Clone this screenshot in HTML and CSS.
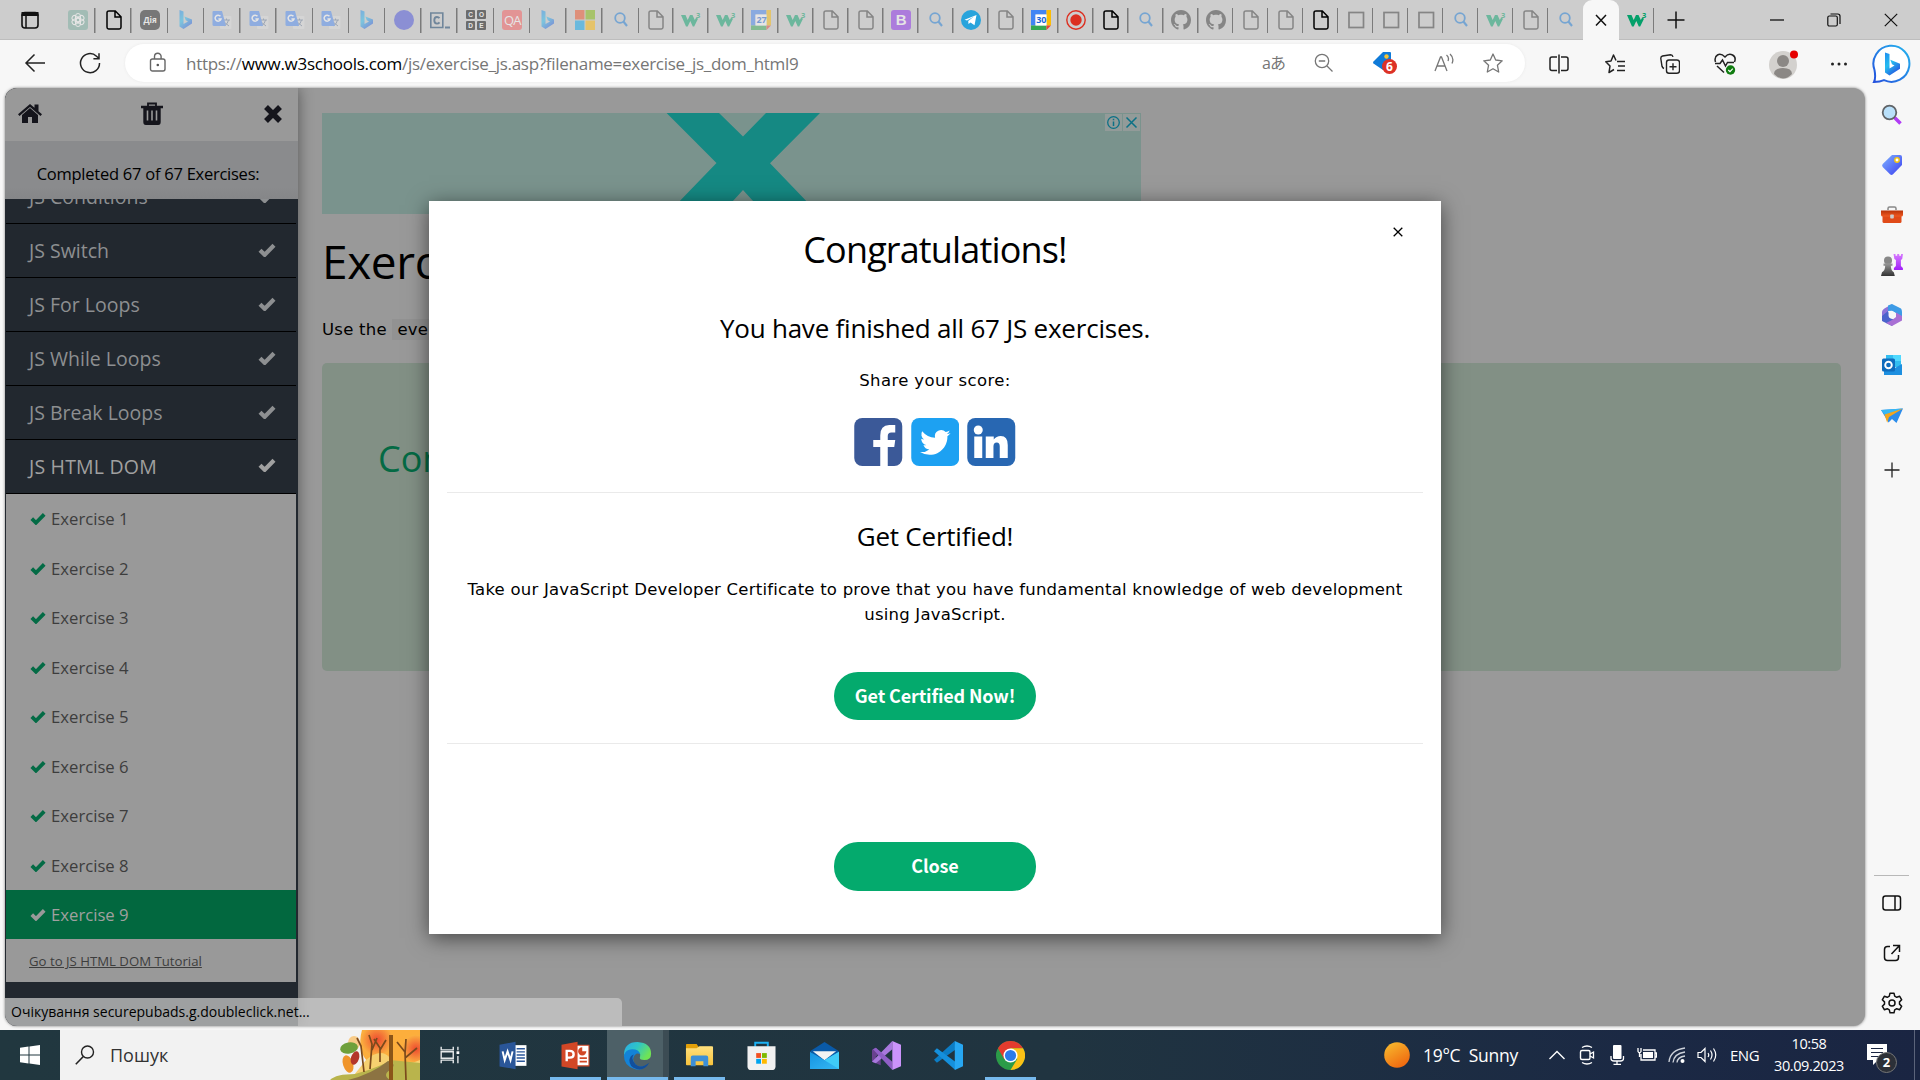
FILE: index.html
```html
<!DOCTYPE html>
<html lang="uk">
<head>
<meta charset="utf-8">
<title>Exercise</title>
<link rel="stylesheet" href="styles.css">
</head>
<body>
<svg class="defs" width="20" height="20">
  <defs>
    <linearGradient id="gb" x1="0" y1="0" x2="0.6" y2="1"><stop offset="0" stop-color="#1f8df0"/><stop offset=".5" stop-color="#25bdf0"/><stop offset="1" stop-color="#2458e0"/></linearGradient>
    <linearGradient id="gring" x1="0" y1="1" x2="1" y2="0"><stop offset="0" stop-color="#2450dd"/><stop offset="1" stop-color="#25b5ee"/></linearGradient>
    <linearGradient id="gtag" x1="0" y1="0" x2="1" y2="1"><stop offset="0" stop-color="#7fb4ff"/><stop offset="1" stop-color="#3b3df0"/></linearGradient>
    <linearGradient id="gred" x1="0" y1="0" x2="0" y2="1"><stop offset="0" stop-color="#b83208"/><stop offset="1" stop-color="#f05a22"/></linearGradient>
    <linearGradient id="gpurp" x1="0" y1="0" x2="0" y2="1"><stop offset="0" stop-color="#d77bff"/><stop offset="1" stop-color="#a020f8"/></linearGradient>
    <linearGradient id="ggray" x1="0" y1="0" x2="0" y2="1"><stop offset="0" stop-color="#999"/><stop offset="1" stop-color="#333"/></linearGradient>
    <linearGradient id="gsun" x1="0" y1="0" x2=".6" y2="1"><stop offset="0" stop-color="#f8c030"/><stop offset="1" stop-color="#f06a10"/></linearGradient>
    <linearGradient id="gedge" x1="0" y1="0" x2="1" y2=".5"><stop offset="0" stop-color="#2aa9ea"/><stop offset=".5" stop-color="#2fc6c6"/><stop offset="1" stop-color="#6fe455"/></linearGradient>
    <linearGradient id="gfold" x1="0" y1="0" x2="0" y2="1"><stop offset="0" stop-color="#ffe07e"/><stop offset="1" stop-color="#f8c33c"/></linearGradient>
    <linearGradient id="gmail" x1="0" y1="0" x2="1" y2="1"><stop offset="0" stop-color="#1592e0"/><stop offset="1" stop-color="#35b8f4"/></linearGradient>
    <radialGradient id="gleaf"><stop offset="0" stop-color="#ee4a30"/><stop offset="1" stop-color="#fbb040"/></radialGradient>
  </defs>
  <symbol id="doc" viewBox="0 0 20 20"><path d="M4.500 1h6.800L17 6.700v10.600q0 1.700-1.700 1.700H4.700Q3 19 3 17.300V2.700Q3 1 4.700 1M11 1.200V7h5.800" fill="none" stroke="currentColor" stroke-width="1.500"/></symbol>
  <symbol id="mag" viewBox="0 0 20 20"><circle cx="9" cy="8" r="4.800" fill="none" stroke="currentColor" stroke-width="1.800"/><path d="M12.400 11.500 16 16" stroke="currentColor" stroke-width="2.100"/></symbol>
  <symbol id="bing" viewBox="0 0 20 20"><path d="M3.500 0 7.500 1.500V14l4.500-2.600-2.200-1.200L8.400 6.600l7.600 3v4L7.500 19l-4-2.500z" fill="url(#gb)"/></symbol>
  <symbol id="trans" viewBox="0 0 20 20"><rect x="8" y="6" width="11.500" height="13" rx="1" fill="#dedede"/><path d="M11 10h7M14.500 8.500V10M12 16q4-2 4.500-6M12 12l5 4" stroke="#6b7f9c" fill="none"/><path d="M1.500 1H10l4 15H2Q.5 16 .5 14.500V2q0-1 1-1z" fill="#4d8bf5"/><path d="M8.500 6.300A3 3 0 1 0 9 9H6.400" fill="none" stroke="#fff" stroke-width="1.500"/></symbol>
  <symbol id="w3" viewBox="0 0 20 20"><path d="M0 5h4.500l2.200 5L9 5h2.500l2.300 5 1.400-2.500 1.800 1.300L13.200 16.500h-1.400L9.300 11l-2.600 5.500H5z" fill="currentColor"/><text x="15" y="7.500" font-size="7.500" font-weight="700" fill="currentColor">3</text></symbol>
  <symbol id="cal" viewBox="0 0 20 20"><path d="M0 0h15.500v4.500H4.500v11H0z" fill="#4285f4"/><path d="M15.500 0H20v15.500h-4.500z" fill="#fbbc04"/><path d="M0 15.500h15.500V20H0z" fill="#34a853"/><path d="M15.500 15.500H20L15.500 20z" fill="#ea4335"/><path d="M4.500 4.500h11v11h-11z" fill="#fff"/></symbol>
  <symbol id="gh" viewBox="0 0 16 16"><path fill="currentColor" d="M8 0C3.580 0 0 3.580 0 8c0 3.540 2.290 6.530 5.470 7.590.4.070.55-.17.55-.38 0-.19-.01-.82-.01-1.490-2.010.37-2.530-.49-2.690-.94-.09-.23-.48-.94-.82-1.130-.28-.15-.68-.52-.01-.53.63-.01 1.080.58 1.230.82.72 1.210 1.870.87 2.330.66.07-.52.28-.87.51-1.070-1.780-.2-3.640-.89-3.640-3.950 0-.87.31-1.590.82-2.150-.08-.2-.36-1.020.08-2.120 0 0 .67-.21 2.200.82.64-.18 1.320-.27 2-.27s1.360.09 2 .27c1.530-1.040 2.200-.82 2.200-.82.44 1.100.16 1.920.08 2.120.51.56.82 1.270.82 2.150 0 3.070-1.870 3.750-3.650 3.950.29.25.54.73.54 1.480 0 1.070-.01 1.930-.01 2.200 0 .21.15.46.55.38A8 8 0 0 0 16 8c0-4.420-3.580-8-8-8z"/></symbol>
  <symbol id="sq" viewBox="0 0 20 20"><rect x="3" y="2.500" width="14.500" height="15" fill="none" stroke="currentColor" stroke-width="1.700"/></symbol>
  <symbol id="check" viewBox="0 0 18 14"><path d="M2 7.200 6.700 11.800 16 2.300" fill="none" stroke="currentColor" stroke-width="4.200"/></symbol>
</svg>

<div class="tabstrip">
  <div class="lead"><svg width="20" height="20" viewBox="0 0 20 20"><rect x="2" y="2.500" width="16" height="15.500" rx="3" fill="none" stroke="#111" stroke-width="1.600"/><path d="M1.500 2h17v4h-17z" fill="#111"/><path d="M6 6v12" stroke="#111" stroke-width="1.500"/></svg></div>
  <div class="tab wide dim"><svg viewBox="0 0 20 20"><rect width="20" height="20" rx="3" fill="#74aa9c"/><g fill="none" stroke="#fff" stroke-width="1"><rect x="7.500" y="3.500" width="5" height="8.500" rx="2.500"/><rect x="7.500" y="3.500" width="5" height="8.500" rx="2.500" transform="rotate(60 10 10)"/><rect x="7.500" y="3.500" width="5" height="8.500" rx="2.500" transform="rotate(120 10 10)"/><rect x="7.500" y="3.500" width="5" height="8.500" rx="2.500" transform="rotate(180 10 10)"/><rect x="7.500" y="3.500" width="5" height="8.500" rx="2.500" transform="rotate(240 10 10)"/><rect x="7.500" y="3.500" width="5" height="8.500" rx="2.500" transform="rotate(300 10 10)"/></g></svg></div>
  <div class="tab wide black"><svg><use href="#doc"/></svg></div>
  <div class="tab wide"><b class="fav diia">Дія</b></div>
  <div class="tab wide dim"><svg><use href="#bing"/></svg></div>
  <div class="tab wide dim"><svg><use href="#trans"/></svg></div>
  <div class="tab wide dim"><svg><use href="#trans"/></svg></div>
  <div class="tab wide dim"><svg><use href="#trans"/></svg></div>
  <div class="tab wide dim"><svg><use href="#trans"/></svg></div>
  <div class="tab wide dim"><svg><use href="#bing"/></svg></div>
  <div class="tab wide"><i class="fav ball"></i></div>
  <div class="tab wide"><svg viewBox="0 0 20 20"><path d="M.8 3h12v14.500H.8z" fill="none" stroke="#70869b" stroke-width="1.600"/><path d="M9.500 8.200Q8.500 7 7 7 4.300 7 4.300 10.300T7 13.600q1.500 0 2.500-1.200M15 17.500h5" fill="none" stroke="#70869b" stroke-width="1.900"/></svg></div>
  <div class="tab wide"><span class="fav code"><b>C</b><b>O</b><b>D</b><b>E</b></span></div>
  <div class="tab wide"><span class="fav qa">QA</span></div>
  <div class="tab wide dim"><svg><use href="#bing"/></svg></div>
  <div class="tab wide dim"><svg viewBox="0 0 20 20"><path d="M0 0h9.500v9.500H0z" fill="#f25022"/><path d="M10.500 0H20v9.500h-9.500z" fill="#7fba00"/><path d="M0 10.500h9.500V20H0z" fill="#00a4ef"/><path d="M10.500 10.500H20V20h-9.500z" fill="#ffb900"/></svg></div>
  <div class="tab wide blue"><svg><use href="#mag"/></svg></div>
  <div class="tab"><svg><use href="#doc"/></svg></div>
  <div class="tab green dim"><svg><use href="#w3"/></svg></div>
  <div class="tab green dim"><svg><use href="#w3"/></svg></div>
  <div class="tab dim"><span class="cal"><svg><use href="#cal"/></svg><b>27</b></span></div>
  <div class="tab green dim"><svg><use href="#w3"/></svg></div>
  <div class="tab"><svg><use href="#doc"/></svg></div>
  <div class="tab"><svg><use href="#doc"/></svg></div>
  <div class="tab"><span class="fav boot">B</span></div>
  <div class="tab blue"><svg><use href="#mag"/></svg></div>
  <div class="tab"><svg viewBox="0 0 20 20"><circle cx="10" cy="10" r="10" fill="#29a4dc"/><path d="M3.500 9.700 15.500 5l-2 10.200-4-2.800-2 1.700-.3-3.200 5.800-4.400-7 4z" fill="#fff"/></svg></div>
  <div class="tab"><svg><use href="#doc"/></svg></div>
  <div class="tab"><span class="cal"><svg><use href="#cal"/></svg><b>30</b></span></div>
  <div class="tab"><svg viewBox="0 0 20 20"><circle cx="10" cy="10" r="9.200" fill="none" stroke="#dc2f20" stroke-width="1.400"/><circle cx="10" cy="10" r="5.700" fill="#dc2f20"/></svg></div>
  <div class="tab black"><svg><use href="#doc"/></svg></div>
  <div class="tab blue"><svg><use href="#mag"/></svg></div>
  <div class="tab"><svg><use href="#gh"/></svg></div>
  <div class="tab"><svg><use href="#gh"/></svg></div>
  <div class="tab"><svg><use href="#doc"/></svg></div>
  <div class="tab"><svg><use href="#doc"/></svg></div>
  <div class="tab black"><svg><use href="#doc"/></svg></div>
  <div class="tab"><svg><use href="#sq"/></svg></div>
  <div class="tab"><svg><use href="#sq"/></svg></div>
  <div class="tab"><svg><use href="#sq"/></svg></div>
  <div class="tab blue"><svg><use href="#mag"/></svg></div>
  <div class="tab green dim"><svg><use href="#w3"/></svg></div>
  <div class="tab"><svg><use href="#doc"/></svg></div>
  <div class="tab blue last"><svg><use href="#mag"/></svg></div>
  <div class="tab active"><svg viewBox="0 0 20 20"><path d="m5 5 10 10.500M15 5 5 15.500" stroke="#111" stroke-width="1.500"/></svg></div>
  <div class="tab green"><svg><use href="#w3"/></svg></div>
  <div class="plus"><svg width="20" height="20" viewBox="0 0 20 20"><path d="M10 1.500v17M1.500 10h17" stroke="#111" stroke-width="1.500"/></svg></div>
  <div class="winctl">
    <svg viewBox="0 0 14 14"><path d="M0 7h14" stroke="#111" stroke-width="1.300"/></svg>
    <svg viewBox="0 0 14 14"><rect x=".8" y="3" width="9.500" height="10" rx="1.500" fill="none" stroke="#111" stroke-width="1.200"/><path d="M3.500 1h7.300Q13 1 13 3.200V11" fill="none" stroke="#111" stroke-width="1.200"/></svg>
    <svg viewBox="0 0 14 14"><path d="m.8.800 12.400 12.400M13.200.8.800 13.200" stroke="#111" stroke-width="1.200"/></svg>
  </div>
</div>

<div class="toolbar">
  <div class="nav"><svg width="22" height="22" viewBox="0 0 22 22"><path d="M21 11H2M10.500 2.500 2 11l8.500 8.500" fill="none" stroke="#222" stroke-width="1.500"/></svg></div>
  <div class="nav"><svg width="22" height="22" viewBox="0 0 22 22"><path d="M20.500 11A9.500 9.500 0 1 1 17.500 4.200L20 6.500M20 1.200v5.500h-5.600" fill="none" stroke="#222" stroke-width="1.500"/></svg></div>
  <div class="omnibox">
    <svg class="lock" width="18" height="20" viewBox="0 0 18 20"><rect x="1.500" y="7" width="14.500" height="12" rx="2" fill="none" stroke="#666" stroke-width="1.400"/><path d="M5.500 7V4.500a3.300 3.300 0 0 1 6.600 0V7" fill="none" stroke="#666" stroke-width="1.400"/><circle cx="8.800" cy="13" r="1.300" fill="#555"/></svg>
    <div class="url">https://<span>www.w3schools.com</span>/js/exercise_js.asp?filename=exercise_js_dom_html9</div>
    <div class="omni-actions">
      <span class="tr">aあ</span>
      <svg viewBox="0 0 20 20"><circle cx="8" cy="8" r="6.700" fill="none" stroke="#767676" stroke-width="1.300"/><path d="M4.800 8h6.400M13 13l5.500 5.500" stroke="#767676" stroke-width="1.300"/></svg>
      <svg class="shop" viewBox="0 0 26 24"><path d="M11 1h7q1 0 1 1v17h-8L1.500 12.500q-1-1 0-2z" fill="#0f7ad8"/><circle cx="14.500" cy="5.500" r="2.200" fill="#f7c331"/><circle cx="17.500" cy="15.500" r="7.500" fill="#dd3226"/><text x="17.500" y="20" text-anchor="middle" font-size="12" font-weight="700" fill="#fff">6</text></svg>
      <svg viewBox="0 0 20 20"><path d="M1 18 6.500 4h1L13 18M3 13h8M12.500 2q3 2.500 1.500 6M16 1q4.500 4 2 9.500" fill="none" stroke="#767676" stroke-width="1.300"/></svg>
      <svg viewBox="0 0 20 20"><path d="m10 1 2.700 6 6.500.8-4.800 4.400L15.700 19 10 15.700 4.300 19l1.300-6.800L.8 7.800l6.500-.8z" fill="none" stroke="#767676" stroke-width="1.300" stroke-linejoin="round"/></svg>
    </div>
  </div>
  <div class="actions">
    <svg viewBox="0 0 20 20"><path d="M8 3H3Q1 3 1 5v9.500q0 2 2 2h5M12 3h5q2 0 2 2v9.500q0 2-2 2h-5M10 .5v19" fill="none" stroke="#222" stroke-width="1.500"/></svg>
    <svg viewBox="0 0 20 20"><path d="M11 6.500 8.500 1 6 7 .8 7.800 5 12 4 18.500l5-3M12 7.500h8M13 12h7M12 16.500h8" fill="none" stroke="#222" stroke-width="1.500" stroke-linejoin="round"/></svg>
    <svg viewBox="0 0 20 20"><rect x="6.500" y="6" width="13" height="13.300" rx="2.500" fill="none" stroke="#222" stroke-width="1.400"/><path d="M13 9.200v7M9.500 12.700h7M4 14.500Q2.500 14 2 12.300L.8 4.500Q.7 2.500 2.500 2L10.500.8q2 0 2.500 2" fill="none" stroke="#222" stroke-width="1.400"/></svg>
    <svg class="heart" viewBox="0 0 22 22"><path d="M1.500 9Q0 4 3.500 2T11 4q3.500-4 7.500-2t2 7M1 10.500h5L8.500 7l3 6 2-3.500H20M3 13l7 6.500" fill="none" stroke="#222" stroke-width="1.500"/><circle cx="16.500" cy="17" r="4.700" fill="#107c10"/><path d="m14.300 17 1.700 1.700 2.800-3" fill="none" stroke="#fff" stroke-width="1.200"/></svg>
    <svg class="avatar" viewBox="0 0 30 30"><circle cx="15" cy="16" r="14" fill="#d3d1ce"/><circle cx="15" cy="12" r="6" fill="#8b8885"/><path d="M6 25q0-6 9-6t9 6q-9 9-18 0z" fill="#8b8885"/><circle cx="26" cy="5.500" r="4" fill="#e60000"/></svg>
    <svg viewBox="0 0 20 20"><g fill="#222"><circle cx="3.500" cy="10" r="1.500"/><circle cx="10" cy="10" r="1.500"/><circle cx="16.500" cy="10" r="1.500"/></g></svg>
    <svg class="copilot" viewBox="0 0 40 40"><path d="M2 38Q4 34 2.500 26A18 18 0 1 1 12 36.200Q8 38 2 38z" fill="#fff" stroke="url(#gring)" stroke-width="2"/><path d="M13 8.500 17.500 10v14.500l5-3-2.500-1.200-1.700-4.500 9.700 4v5L17.500 31.500l-4.500-3z" fill="url(#gb)"/></svg>
  </div>
</div>

<div class="middle">
  <div class="viewport">
    <aside class="sidenav">
      <div class="side-tools">
        <svg width="24" height="20" viewBox="0 0 24 20"><path d="M12 4 4 11v8h6v-6h4v6h6v-8z"/><path d="M12 0 0 10.300l1.500 1.600L12 3l10.500 9 1.500-1.700-3.500-3V.5h-4v3.300z"/></svg>
        <svg width="22" height="23" viewBox="0 0 22 23"><path d="M7 4V1.500h8V4" fill="none" stroke="#15151c" stroke-width="1.800"/><path d="M0 3.800h22v2.400H0zM2.300 6h17.400v14q0 3-2.500 3H4.800q-2.500 0-2.500-3z"/><path d="M6.500 8.500v10M11 8.500v10M15.500 8.500v10" stroke="#999" stroke-width="1.600"/></svg>
        <svg width="20" height="20" viewBox="0 0 20 20"><path d="m3 3 14 14M17 3 3 17" stroke="#15151c" stroke-width="5.500"/></svg>
      </div>
      <div class="completed">Completed 67 of 67 Exercises:</div>
      <div class="side-list">
        <div class="group first"><span>JS Conditions</span><svg><use href="#check"/></svg></div>
        <div class="group"><span>JS Switch</span><svg><use href="#check"/></svg></div>
        <div class="group"><span>JS For Loops</span><svg><use href="#check"/></svg></div>
        <div class="group"><span>JS While Loops</span><svg><use href="#check"/></svg></div>
        <div class="group"><span>JS Break Loops</span><svg><use href="#check"/></svg></div>
        <div class="group open"><span>JS HTML DOM</span><svg><use href="#check"/></svg></div>
        <div class="ex"><svg><use href="#check"/></svg>Exercise 1</div>
        <div class="ex"><svg><use href="#check"/></svg>Exercise 2</div>
        <div class="ex"><svg><use href="#check"/></svg>Exercise 3</div>
        <div class="ex"><svg><use href="#check"/></svg>Exercise 4</div>
        <div class="ex"><svg><use href="#check"/></svg>Exercise 5</div>
        <div class="ex"><svg><use href="#check"/></svg>Exercise 6</div>
        <div class="ex"><svg><use href="#check"/></svg>Exercise 7</div>
        <div class="ex"><svg><use href="#check"/></svg>Exercise 8</div>
        <div class="ex current"><svg><use href="#check"/></svg>Exercise 9</div>
        <div class="tutorial"><u>Go to JS HTML DOM Tutorial</u></div>
      </div>
    </aside>
    <main class="content">
      <div class="ad">
        <svg class="ad-art" width="819" height="101" viewBox="0 0 819 101"><path d="M344.600 0H397L421 23.500 444 0h54l-50 50.300L490 94l6 7h-53l-22-24-22 24h-53l6-7L394.500 50z" fill="#158983"/></svg>
        <div class="ad-ctl"><svg viewBox="0 0 17 17"><circle cx="8.500" cy="8.500" r="5.800" fill="none" stroke="#0b7186" stroke-width="1.300"/><path d="M8.500 7.500v4.500M8.500 4.800v1.500" stroke="#0b7186" stroke-width="1.500"/></svg><svg viewBox="0 0 17 17"><path d="m3.500 3.500 10 10M13.500 3.500l-10 10" stroke="#0b7186" stroke-width="1.500"/></svg></div>
      </div>
      <h1>Exercise:</h1>
      <p class="task">Use the <code>eventListener</code></p>
      <div class="result">Congratulations!</div>
    </main>
    <div class="modal">
      <svg class="modal-x" width="10" height="10" viewBox="0 0 10 10"><path d="m.7.700 8.600 8.600M9.300.7.700 9.300" stroke="#000" stroke-width="1.300"/></svg>
      <h2>Congratulations!</h2>
      <h3 class="finished">You have finished all 67 JS exercises.</h3>
      <p class="share">Share your score:</p>
      <div class="social">
        <svg viewBox="0 0 48 48"><rect width="48" height="48" rx="8" fill="#3b5998"/><path d="M26 48V29h-7v-7h7v-4.500Q26 7 35 7h6v7.500h-4Q33.500 14.500 33.500 18v4H41l-1 7h-6.500v19z" fill="#fff"/></svg>
        <svg viewBox="0 0 48 48"><rect width="48" height="48" rx="8" fill="#1da1f2"/><path transform="translate(8.800 9.200) scale(1.270)" fill="#fff" d="M24 4.560a10 10 0 0 1-2.830.78 5 5 0 0 0 2.160-2.730 10 10 0 0 1-3.120 1.200 4.920 4.920 0 0 0-8.390 4.480A14 14 0 0 1 1.670 3.150a4.930 4.930 0 0 0 1.520 6.570 4.900 4.900 0 0 1-2.230-.61c-.05 2.280 1.580 4.420 3.950 4.890a4.900 4.900 0 0 1-2.220.09 4.930 4.930 0 0 0 4.600 3.420A9.900 9.900 0 0 1 0 19.540a14 14 0 0 0 7.550 2.210c9.140 0 14.300-7.720 13.990-14.640A10 10 0 0 0 24 4.560z"/></svg>
        <svg viewBox="0 0 48 48"><rect width="48" height="48" rx="8" fill="#2867b2"/><g fill="#fff"><circle cx="11" cy="12" r="4.500"/><path d="M7 18.500h8V40H7zM18.500 18.500h8v3q2.500-3.500 7-3.500 7 0 7 9v13h-8V28.500q0-4-3-4-3.300 0-3.300 4V40h-7.700z"/></g></svg>
      </div>
      <hr>
      <h3 class="cert">Get Certified!</h3>
      <p class="desc">Take our JavaScript Developer Certificate to prove that you have fundamental knowledge of web development<br>using JavaScript.</p>
      <div class="btn">Get Certified Now!</div>
      <hr class="second">
      <div class="btn close">Close</div>
    </div>
    <div class="status">Очікування securepubads.g.doubleclick.net...</div>
  </div>

  <div class="edgebar">
    <svg viewBox="0 0 22 22"><path d="m13.500 13.500 6 6" stroke="#b13cf5" stroke-width="3.600"/><circle cx="8.500" cy="8.500" r="6.800" fill="#b9e0fa" stroke="#606468" stroke-width="1.800"/></svg>
    <svg viewBox="0 0 22 22"><path d="M11 1h8q2 0 2 2v8L12 20.300q-1.500 1.300-3 0L1.700 13q-1.200-1.500 0-3z" fill="url(#gtag)"/><circle cx="16" cy="6" r="2.200" fill="#fff" stroke="#f3c515" stroke-width="1.500"/></svg>
    <svg viewBox="0 0 22 22"><path d="M7 6V4.500Q7 3 8.500 3h5Q15 3 15 4.500V6" fill="none" stroke="#888" stroke-width="1.500"/><path d="M1.500 10h19v7.500q0 1.500-1.500 1.500H3q-1.500 0-1.500-1.500z" fill="#e04a18"/><path d="M0 6.500h22V11q0 1.500-2 1.500H2q-2 0-2-1.500z" fill="url(#gred)"/><rect x="9.200" y="10.500" width="3.600" height="4" rx=".8" fill="#ccc"/></svg>
    <svg viewBox="0 0 22 22"><path d="M12.500 0h2v1.800h1.700V0h2v1.800H20V0h2l-.8 5-1.300 1v6l2 2v2h-9v-2l2-2V6l-1.500-1z" fill="url(#gpurp)"/><circle cx="7" cy="6.500" r="4" fill="#888"/><path d="M2.500 9.500h9v2.300H9.800q.3 5 3 6.500l1 3.700H0l1-3.700q3-1.500 3.200-6.500H2.500z" fill="url(#ggray)"/></svg>
    <svg viewBox="0 0 22 22"><path d="M11 0 6 3Q1 5.500 1 8v9l6-2V7z" fill="#8d73d8"/><path d="M7 1.500 11 0l9 4.500Q21 5.500 21 8v6l-6-5-4-2.300L7 7z" fill="#3d9be6"/><path d="M1 11v6l10 5 3-6-5-2-2-7-6 5z" fill="#4b63cb"/><path d="M21 12v4.500L11 22l-6-3 6-3 4-3V8.500z" fill="#a86fd4"/><circle cx="11" cy="11" r="3.500" fill="#f7f7f7"/></svg>
    <svg viewBox="0 0 22 22"><path d="M5 1h15v12H5z" fill="#32bdf0"/><path d="M12 1h8v6h-8z" fill="#50d9ff"/><path d="M3 11 12 15l9-5v11H3z" fill="#1d8fe0"/><rect x="1" y="4.500" width="13" height="13" rx="1.500" fill="#0f6cbd"/><circle cx="7.500" cy="11" r="3.300" fill="none" stroke="#fff" stroke-width="1.900"/></svg>
    <svg viewBox="0 0 22 22"><path d="M0 5 22 3.500 15.500 18 11 14l-3.500 3.500z" fill="#2b8ceb"/><path d="M0 5 22 3.500 4 10z" fill="#36b8f5"/><path d="M22 3.500 3.500 9.500l2.700 8.300L8 12z" fill="#f3a61d"/></svg>
    <svg class="add" viewBox="0 0 22 22"><path d="M11 3.500v15M3.500 11h15" stroke="#222" stroke-width="1.300"/></svg>
    <div class="bottom">
      <svg viewBox="0 0 22 22"><rect x="2" y="4" width="17.500" height="14" rx="2.500" fill="none" stroke="#111" stroke-width="1.500"/><path d="M14 4v14" stroke="#111" stroke-width="1.500"/></svg>
      <svg viewBox="0 0 22 22"><path d="M9 4.500H6.500Q3.500 4.500 3.500 7.500v8q0 3 3 3h8q3 0 3-3V13M12 3.500h6.500V10M18.500 3.500 10.500 12" fill="none" stroke="#111" stroke-width="1.500"/></svg>
      <svg viewBox="0 0 22 22"><path d="m9 1.200 4 0 .7 3 2 1.100 3-1 2 3.500-2.200 2.100v2.200l2.200 2.100-2 3.500-3-1-2 1.100-.7 3H9l-.7-3-2-1.100-3 1-2-3.500L3.500 12.100V9.900L1.300 7.800l2-3.500 3 1 2-1.100z" fill="none" stroke="#111" stroke-width="1.500" stroke-linejoin="round"/><circle cx="11" cy="11" r="3" fill="none" stroke="#111" stroke-width="1.500"/></svg>
    </div>
  </div>
</div>

<div class="taskbar">
  <div class="start"><svg width="20" height="20" viewBox="0 0 20 20"><path d="m0 2.800 8.500-1.200v8H0zM9.500 1.500 20 0v9.600H9.500zM0 10.500h8.500v8L0 17.300zM9.500 10.500H20V20L9.500 18.600z" fill="#fff"/></svg></div>
  <div class="search">
    <svg width="20" height="20" viewBox="0 0 20 20"><circle cx="12.500" cy="7" r="6" fill="none" stroke="#222" stroke-width="1.400"/><path d="M8.300 11.500.8 19.300" stroke="#222" stroke-width="1.600"/></svg>
    <span>Пошук</span>
    <svg class="autumn" width="90" height="50" viewBox="0 0 90 50"><path d="M32 0h58v34H40q-14-12-8-34z" fill="#fcae3c"/><circle cx="47" cy="10" r="16" fill="url(#gleaf)"/><circle cx="86" cy="19" r="14" fill="url(#gleaf)"/><ellipse cx="24" cy="13" rx="6" ry="7" fill="#fbb040" opacity=".6"/><path d="M36 30q15-13 24-2t30 2v20H20z" fill="#f6d070"/><path d="M0 50q6-6 25-6 28-8 35-14l30 3v17z" fill="#b9b44c"/><path d="M18 50q24-6 40-19 10 3 2 9-8 5 0 10z" fill="#8c7342"/><ellipse cx="19" cy="18" rx="9" ry="5.500" fill="#6fa03b" transform="rotate(-10 19 18)"/><ellipse cx="18" cy="34" rx="5" ry="9" fill="#f0952b" transform="rotate(-18 18 34)"/><ellipse cx="25" cy="28" rx="4" ry="7" fill="#b3352a" transform="rotate(18 25 28)"/><path d="M34 42 31 16 27 8M40 39 42 14 39 5M42 20l5-12M50 32V18l-6-9M50 20l6-10M76 50l-1-28-8-10M75 28l12-10M75 24l1-15" fill="none" stroke="#7b4a1c" stroke-width="1.700"/><path d="M61 50V5" stroke="#8b5518" stroke-width="4"/></svg>
  </div>
  <div class="app view"><svg viewBox="0 0 28 28"><path d="M4.500 5v3.500h13V5M4.500 23v-3.500h13V23M4.500 10.500h13v7h-13zM22.500 5v4M22.500 15v8" fill="none" stroke="#e6e9ea" stroke-width="1.500"/><path d="M21 10h3v3h-3z" fill="#fff"/></svg></div>
  <div class="app"><svg viewBox="0 0 28 28"><path d="M14 4h12.500v20H14z" fill="#fff"/><path d="M17 7.500h8M17 10.500h8M17 13.500h8M17 16.500h8M17 19.500h8" stroke="#2a5699" stroke-width="1.400"/><path d="M.5 3.500 16 .8v26.400L.5 24.500z" fill="#2a5699"/><path d="m3.500 10 2 8.500L8.300 10l2.800 8.500 2-8.500" fill="none" stroke="#fff" stroke-width="1.900"/></svg></div>
  <div class="app run"><svg viewBox="0 0 28 28"><path d="M14 4h13v20H14z" fill="#fff" stroke="#d24726"/><path d="M18 16.500h7M18 20h7" stroke="#d24726" stroke-width="1.700"/><path d="M20.500 6v4h4a4 4 0 1 1-4-4" fill="#d24726"/><path d="M.5 3.500 16 .8v26.400L.5 24.500z" fill="#d24726"/><path d="M5.500 19.500V9.500h3q3.700 0 3.700 3.200T8.500 16h-3" fill="none" stroke="#fff" stroke-width="2.300"/></svg></div>
  <div class="app run edge"><svg viewBox="0 0 32 32"><path d="M1 16Q1 1 16 1q15 1 15 13 0 7-7.500 7-5 0-5-2.500Q19 17 19 15q-3-6-9-5-6 1-9 6z" fill="url(#gedge)"/><path d="M1 16q2-7 9-7 8 0 9 6-2-2-4.500-1Q8 19 14 26q5 5 13 0-6 8-15 4.500Q1 27 1 16z" fill="#1383d8"/><path d="M12 15q-4 5 2 11 6 5 15-2-5 9-14 7-8-2-8-10 1-5 5-6z" fill="#124f9c"/></svg></div>
  <div class="app run"><svg viewBox="0 0 30 30"><path d="M1 4q0-1 1-1h10l2 3h13v8H1z" fill="#e3a008"/><path d="M1 7.500h11l3-2h13q1 0 1 1V24q0 1-1 1H2q-1 0-1-1z" fill="url(#gfold)"/><path d="M6 26V17q0-2 2-2h14q2 0 2 2v9h-5v-5h-8v5z" fill="#3d8fd6"/></svg></div>
  <div class="app"><svg viewBox="0 0 30 30"><path d="M8.500 6V1.800h13V6" fill="none" stroke="#1cb2f5" stroke-width="2"/><path d="M.5 5.500h29V26q0 4-4 4h-21q-4 0-4-4z" fill="#f1f1f1"/><path d="M9.500 12.500h5v5h-5z" fill="#f25022"/><path d="M15.500 12.500h5v5h-5z" fill="#7fba00"/><path d="M9.500 18.500h5v5h-5z" fill="#00a4ef"/><path d="M15.500 18.500h5v5h-5z" fill="#ffb900"/></svg></div>
  <div class="app"><svg viewBox="0 0 30 30"><path d="M0 10.500 15 1l15 9.500-15 12z" fill="#0a5aa8"/><path d="M3 10.500h24L15 20z" fill="#f3f3f3"/><path d="M0 11v18h30V11L15 20z" fill="url(#gmail)"/><path d="M30 11v18L15 20z" fill="#3fcbf8"/></svg></div>
  <div class="app"><svg viewBox="0 0 30 30"><path d="m0 9 4-2 5 5-5 4v6l5-4v7l-5-2-4-1.500z" fill="#68418f"/><path d="M21 0v8.500L4 23l-4-1.500z" fill="#a878dd"/><path d="M4 7 21 21.500V30L1 8.500z" fill="#8f5fc6"/><path d="m21 0 9 4v22l-9 4z" fill="#cb93fb"/></svg></div>
  <div class="app"><svg viewBox="0 0 30 30"><path d="M21.500 0 0 19.500 3 22.500 22 9z" fill="#0c7dc5"/><path d="m0 10.500 3-3L22 21.500V30z" fill="#1590dc"/><path d="m21.500 0 8.500 4v22l-8.500 4z" fill="#27a7f2"/></svg></div>
  <div class="app run"><svg viewBox="0 0 30 30"><circle cx="15" cy="15" r="15" fill="#2b9b48"/><path d="M2 7.500a15 15 0 0 1 26 0H15L8.500 19z" fill="#e33b2e"/><path d="M28 7.500A15 15 0 0 1 15 30l7-11.500L15 7.500z" fill="#fbc116"/><circle cx="15" cy="15" r="7.300" fill="#fff"/><circle cx="15" cy="15" r="5.800" fill="#2c7bea"/></svg></div>
  <div class="tray">
    <svg class="sun" width="26" height="26" viewBox="0 0 26 26"><circle cx="13" cy="13" r="12.800" fill="url(#gsun)"/></svg>
    <span class="weather">19°C&nbsp; Sunny</span>
    <svg viewBox="0 0 20 20"><path d="m2.500 14 7.500-7.500 7.500 7.500" fill="none" stroke="#fff" stroke-width="1.400"/></svg>
    <svg viewBox="0 0 20 20"><rect x="3.500" y="5.500" width="9.500" height="9" rx="1.500" fill="none" stroke="#fff" stroke-width="1.400"/><path d="m13 9 3.500-2v6L13 11M5 2.500q5-3 10 0M5 17.500q5 3 10 0" fill="none" stroke="#fff" stroke-width="1.300"/></svg>
    <svg viewBox="0 0 20 20"><rect x="6" y="0" width="8.500" height="14" rx="1" fill="#fff"/><path d="M4 11v2.500q0 2.500 3 2.500h6.500q3 0 3-2.500V11M10 16v3M6.500 19.300h7.500" fill="none" stroke="#fff" stroke-width="1.300"/></svg>
    <svg viewBox="0 0 20 20"><path d="M6 5h12v10H4V9M18 8h1.500v4H18M1 3v3.500q1.500 2.500 3 0V3M2.500 8v4" fill="none" stroke="#fff" stroke-width="1.300"/><path d="M6 7h10v6H6z" fill="#fff"/></svg>
    <svg viewBox="0 0 20 20"><path d="M2 17Q3 5 18 3M6 17.500Q7 8.500 18 7M10 17.500q.5-5.500 8-6.500" fill="none" stroke="#cdd2da" stroke-width="1.300"/><circle cx="15.500" cy="16" r="2" fill="#fff"/></svg>
    <svg viewBox="0 0 20 20"><path d="M1 7.500h3l4-4v13l-4-4H1zM11 8q1.500 2 0 4M13.500 5.500q3 4.500 0 9M16.500 3.500q4.500 6.500 0 13" fill="none" stroke="#fff" stroke-width="1.200"/></svg>
    <span class="lang">ENG</span>
    <span class="clock">10:58<br>30.09.2023</span>
    <span class="notif"><svg width="22" height="22" viewBox="0 0 22 22"><path d="M0 0h20v16h-9l-5 5v-5H0z" fill="#fff"/><path d="M4 4.500h12M4 8.500h12M4 12.500h8" stroke="#1a2542" stroke-width="1.200"/></svg><b>2</b></span>
    <i class="peek"></i>
  </div>
</div>
</body>
</html>
```

FILE: styles.css
```css
* { box-sizing: border-box; }
body {
  margin: 0;
  width: 1920px;
  height: 1080px;
  overflow: hidden;
  display: flex;
  flex-direction: column;
  background: #f7f7f7;
  font-family: "Open Sans", "Noto Sans", sans-serif;
  color: #000;
}
svg { display: block; flex: none; }
.defs { position: absolute; }
h1, h2, h3, p { margin: 0; font-weight: 400; }

/* tab strip */
.tabstrip { height: 40px; display: flex; background: #cdcdcd; border-bottom: 1px solid #bdbdbd; flex: none; }
.lead { width: 59.500px; display: flex; align-items: center; justify-content: center; }
.tab {
  width: 34.980px;
  flex: none;
  display: flex;
  align-items: center;
  justify-content: center;
  color: #858585;
  background: linear-gradient(#7b7b7b, #7b7b7b) right 8px / 1.500px 25px no-repeat;
}
.tab svg { width: 20px; height: 20px; }
.wide { width: 36.230px; }
.last { background: none; }
.black { color: #000; }
.blue { color: #76a5d2; }
.green { color: #04a06a; }
.dim > * { opacity: .48; }
.active { width: 36px; height: 40px; background: #f7f7f7; border-radius: 9px 9px 0 0; }
.fav { width: 20px; height: 20px; display: flex; align-items: center; justify-content: center; border-radius: 3px; color: #e5e5e5; }
.diia { background: #777; border-radius: 5px; font-size: 8px; }
.ball { background: #8b8fd4; border-radius: 50%; }
.code { display: grid; grid-template-columns: 9px 9px; gap: 2px; }
.code b { background: #6c6c6c; font: 700 6.500px/9px "Liberation Sans", sans-serif; text-align: center; border-radius: 1px; }
.qa { background: #e29495; font-size: 13px; letter-spacing: -1px; }
.boot { background: #ac7cdc; font: 700 15px "Liberation Sans", sans-serif; }
.cal { position: relative; }
.cal b { position: absolute; inset: 0; text-align: center; font-size: 9px; line-height: 20px; color: #1a66d8; letter-spacing: -.3px; }
.plus { width: 44px; display: flex; align-items: center; justify-content: center; }
.winctl { margin-left: auto; display: flex; width: 172px; align-items: center; justify-content: space-around; }
.winctl svg { width: 14px; height: 14px; }

/* toolbar */
.toolbar { height: 48px; flex: none; display: grid; grid-template-columns: 64px 61px 1400px 395px; padding: 4px 0 6px; }
.nav { display: flex; align-items: center; justify-content: center; }
.nav:first-child { padding-left: 6px; }
.nav + .nav { padding-right: 9px; }
.omnibox { height: 38px; border-radius: 19px; background: #fff; display: flex; align-items: center; box-shadow: 0 0 3px #e8e8e8; }
.lock { margin: 0 19px 2px 24px; }
.url { color: #767676; font-size: 17px; letter-spacing: -.28px; white-space: nowrap; }
.url span { color: #000; }
.omni-actions { margin-left: auto; width: 277px; display: grid; grid-template-columns: 51px 49px 74px 44px 54px; align-items: center; justify-items: center; }
.omni-actions svg { width: 20px; height: 20px; }
.omni-actions .shop { width: 26px; height: 24px; }
.tr { color: #767676; font-size: 16px; letter-spacing: -1px; font-family: "Open Sans", "Noto Sans CJK JP", sans-serif; line-height: 20px; }
.actions { display: grid; grid-template-columns: 62px 50px 59px 52px 63px 50px 56px; justify-items: center; align-items: center; padding-left: 3px; height: 38px; }
.actions svg { width: 20px; height: 20px; }
.actions .heart { width: 22px; height: 22px; }
.actions .avatar { width: 30px; height: 30px; }
.actions .copilot { width: 40px; height: 40px; }

/* page */
.middle { height: 942px; flex: none; display: flex; padding-left: 5px; }
.viewport { position: relative; width: 1860px; height: 938px; display: flex; background: #999; border-radius: 12px; overflow: hidden; box-shadow: 0 0 3px #777; }
.sidenav { width: 293px; height: 938px; background: #22282f; flex: none; box-shadow: 0 0 14px rgba(0,0,0,.45); position: relative; display: flex; flex-direction: column; }
.side-tools { height: 53px; background: #999; display: flex; justify-content: space-between; padding: 14px 15px 0 13px; fill: #15151c; flex: none; }
.side-tools svg:first-child { margin-top: 2px; }
.side-tools svg:nth-child(2) { margin-right: 1px; }
.side-tools svg:last-child { margin-top: 2px; }
.completed { height: 58px; flex: none; background: linear-gradient(#8a8b8d 80%, #858688); text-align: center; font-size: 16.500px; letter-spacing: -.25px; line-height: 66px; padding-right: 7px; white-space: nowrap; }
.side-list { height: 827px; overflow: hidden; padding: 0 2px 0 1px; }
.group { height: 53.900px; border-bottom: 1px solid #000; display: flex; align-items: center; justify-content: space-between; padding: 0 20px 0 23px; color: #8d8f91; font-size: 19.500px; }
.group svg { width: 18px; height: 14px; margin-bottom: 2px; }
.group.first { margin-top: -28.500px; }
.group.open { color: #a0a0a0; letter-spacing: .2px; }
.ex { height: 49.500px; background: #999; color: #3d3d3d; display: flex; align-items: center; gap: 5px; padding-left: 24px; font-size: 16.700px; }
.ex svg { width: 16px; height: 13px; color: #036b45; }
.ex.current { background: #02683f; color: #a0a0a0; }
.ex.current svg { color: #999; }
.tutorial { height: 43px; background: #999; color: #3d3d3d; font-size: 13.200px; line-height: 44px; padding-left: 23px; }
.content { padding: 25px 24px 0 24px; flex: 1; }
.ad { width: 819px; height: 101px; background: #7a938d; position: relative; }
.ad-ctl { position: absolute; right: 1px; top: 1px; display: flex; gap: 1px; }
.ad-ctl svg { width: 17px; height: 17px; background: #929b99; }
h1 { font-size: 46px; line-height: 60px; margin-top: 17px; letter-spacing: -.4px; }
.task { font: 16.500px/24px "DejaVu Sans", sans-serif; letter-spacing: .25px; margin-top: 27px; }
.task code { font: inherit; background: #929292; padding: 1px 5px; }
.result { margin-top: 21px; height: 308px; border-radius: 5px; background: #829085; padding: 71px 56px; font-size: 36px; line-height: 50px; color: #046a44; }

/* dialog */
.modal { position: absolute; left: 424px; top: 113px; width: 1012px; height: 733px; background: #fff; box-shadow: 0 4px 20px rgba(0,0,0,.55); text-align: center; padding: 0 18px; }
.modal-x { position: absolute; right: 38px; top: 26px; }
h2 { font-size: 36px; line-height: 50px; padding-top: 24px; letter-spacing: -.85px; }
h3 { font-size: 26px; line-height: 36px; letter-spacing: -.22px; }
.finished { margin-top: 35px; }
.share, .desc { font: 16.500px/25px "DejaVu Sans", sans-serif; letter-spacing: .22px; }
.share { margin-top: 22px; letter-spacing: .38px; }
.social { display: flex; justify-content: center; gap: 8px; margin: 25px 0 26px; }
.social svg { width: 48.500px; height: 48px; }
hr { border: 0; border-top: 1px solid #eaeaea; margin: 0; }
.cert { margin-top: 25px; }
.desc { margin: 23px -10px 0; white-space: nowrap; }
.btn { width: 202px; height: 48px; margin: 45px auto 0; border-radius: 24px; background: #04aa6d; color: #fff; font: 700 18px/47px "Noto Sans CJK SC", sans-serif; letter-spacing: -.15px; }
.second { margin-top: 23px; }
.close { margin-top: 98px; height: 49px; }
.status { position: absolute; left: 0; bottom: 0; width: 617px; height: 28px; background: rgba(200,200,200,.75); border-radius: 0 5px 0 0; font-size: 14px; line-height: 27px; padding-left: 6px; }

/* right bar */
.edgebar { width: 53px; height: 938px; display: flex; flex-direction: column; align-items: center; gap: 28.100px; padding-top: 16px; }
.edgebar svg { width: 22px; height: 22px; }
.edgebar .add { margin-top: 4px; }
.bottom { margin-top: auto; width: 35px; border-top: 1px solid #b8b8b8; display: flex; flex-direction: column; align-items: center; gap: 28px; padding: 16px 0 12px; }

/* taskbar */
.taskbar { height: 50px; flex: none; display: flex; background: linear-gradient(90deg, #21373f 0, #203440 55%, #1b2944 85%, #1a2542); color: #fff; }
.start { width: 60px; display: flex; align-items: center; justify-content: center; }
.search { width: 360px; background: #f2f2f2; color: #333; display: flex; align-items: center; padding-left: 15px; gap: 15px; font-size: 18px; }
.autumn { margin-left: auto; }
.app { width: 62.100px; display: flex; align-items: center; justify-content: center; }
.app svg { width: 29px; height: 29px; }
.view { width: 62.500px; padding-right: 3px; }
.view svg { width: 26px; height: 26px; }
.run { background: linear-gradient(#76b9ed, #76b9ed) center bottom / 51px 3px no-repeat; }
.edge { background: linear-gradient(#76b9ed, #76b9ed) center bottom / 61px 3px no-repeat, linear-gradient(90deg, #4d6067 56px, #3c4c54 56px); }
.tray { margin-left: auto; width: 536px; display: flex; align-items: center; }
.tray > svg { width: 20px; height: 20px; margin-right: 10px; }
.tray .sun { width: 26px; height: 26px; margin-right: 13px; }
.weather { font-size: 17.500px; width: 124px; letter-spacing: -.3px; white-space: nowrap; }
.lang { font-size: 15px; width: 40px; letter-spacing: -.5px; margin-left: 3px; }
.clock { font-size: 14.500px; line-height: 22.500px; width: 78px; text-align: center; letter-spacing: -.4px; margin-right: 19px; }
.notif { position: relative; }
.notif b { position: absolute; left: 9px; top: 8px; width: 21px; height: 21px; border-radius: 50%; background: #2c3038; border: 1px solid #777; font-size: 13px; line-height: 18px; text-align: center; }
.peek { margin-left: auto; margin-right: 5px; width: 1px; height: 50px; background: #5b647a; }
```
